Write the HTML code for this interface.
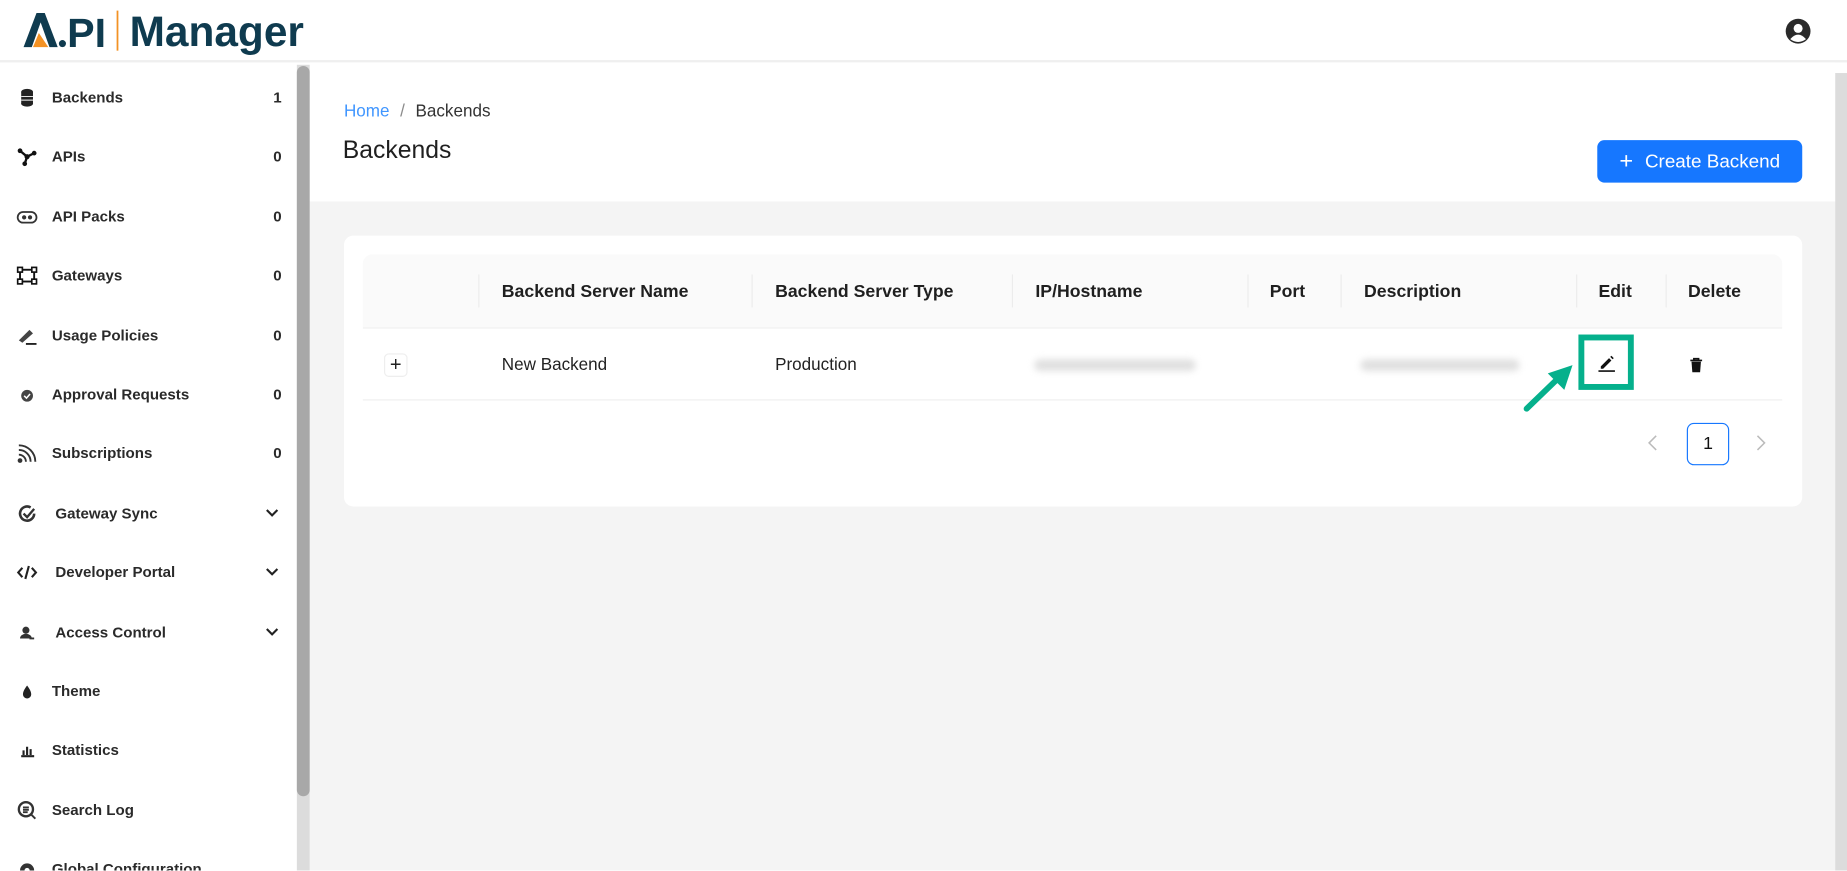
<!DOCTYPE html>
<html><head><meta charset="utf-8"><style>
*{box-sizing:border-box;margin:0;padding:0}
html,body{width:1847px;height:870px;overflow:hidden;background:#fff}
#w{position:absolute;left:0;top:0;width:1568px;height:739px;transform:scale(1.17793);transform-origin:0 0;font-family:"Segoe UI","Liberation Sans",sans-serif;color:#1f1f1f;overflow:hidden}
.abs{position:absolute}
.hdr{left:0;top:0;width:1568px;height:53px;background:#fff;border-bottom:2px solid #efefef}
.side{left:0;top:55px;width:252px;height:684px;background:#fff}
.sb{left:252px;top:55px;width:11px;height:684px;background:#dcdcdc}
.thumb{left:252px;top:56px;width:11px;height:620px;background:#a8a8a8;border-radius:6px}
.item{position:absolute;left:0;width:252px;height:20px;font-size:12.8px;font-weight:700;color:#2a2a2a;line-height:20px}
.item .t{position:absolute;left:44px}
.item .c{position:absolute;left:232px;font-weight:600}
.item .ic{position:absolute;left:14px;top:1px;width:18px;height:18px}
.item .ch{position:absolute;left:224px;top:2px}
.main{left:263px;top:53px;width:1295px;height:118px;background:#fff}
.gray{left:263px;top:171px;width:1295px;height:568px;background:#f4f4f4}
.rs{left:1558px;top:62px;width:10px;height:677px;background:#dcdcdc}
.card{left:292px;top:200px;width:1238px;height:230px;background:#fff;border-radius:8px}
.th{left:308px;top:216px;width:1205px;height:63px;background:#fafafa;border-bottom:1px solid #eee;border-radius:8px 8px 0 0}
.hd{position:absolute;top:239px;font-size:15px;font-weight:700;color:#1f1f1f}
.sep{position:absolute;top:233px;width:1px;height:28px;background:#ececec}
.cell{position:absolute;top:302px;font-size:14.5px;color:#222}
.blur{position:absolute;top:305px;height:10px;background:#e0e0e0;filter:blur(3px);border-radius:6px}
</style></head><body><div id="w">
<div class="abs hdr"></div>
<svg class="abs" style="left:16px;top:6px" width="250" height="42" viewBox="0 0 250 42">
<path d="M4 34 L15 5 L22 5 L33 34 L26 34 L18.5 13 L11 34 Z" fill="#0f3b4f"/>
<path d="M12 34 L17 22 L25 34 Z" fill="#f39224"/>
<circle cx="37" cy="31" r="3" fill="#0f3b4f"/>
<text x="41" y="34" font-family="Liberation Sans,sans-serif" font-weight="700" font-size="35" fill="#0f3b4f">PI</text>
<rect x="83" y="3" width="1.5" height="34" fill="#f39224"/>
<text x="94" y="33" font-family="Liberation Sans,sans-serif" font-weight="700" font-size="36" textLength="148" fill="#0f3b4f">Manager</text>
</svg>
<svg class="abs" style="left:1515px;top:15px" width="23" height="23" viewBox="0 0 24 24"><circle cx="12" cy="12" r="11" fill="#2a2a2a"/><circle cx="12" cy="9.5" r="4" fill="#fff"/><path d="M5 19 Q12 11 19 19 Q12 24 5 19Z" fill="#fff"/></svg>

<div class="abs side"></div>
<div class="abs sb"></div><div class="abs thumb"></div>

<div class="item" style="top:73px"><svg class="ic" viewBox="0 0 18 18"><ellipse cx="9" cy="4" rx="5" ry="2.5" fill="#222"/><rect x="4" y="4" width="10" height="10" fill="#222"/><ellipse cx="9" cy="14" rx="5" ry="2.5" fill="#222"/><path d="M4 8h10M4 11h10" stroke="#fff" stroke-width=".8"/></svg><span class="t">Backends</span><span class="c">1</span></div>
<div class="item" style="top:123px"><svg class="ic" viewBox="0 0 18 18"><path d="M3 4 L9 9 L15 6 M9 9 L7 15" stroke="#111" stroke-width="2" fill="none"/><circle cx="3" cy="4" r="2" fill="#111"/><circle cx="15" cy="6" r="2" fill="#111"/><circle cx="7" cy="15" r="2" fill="#111"/><circle cx="9" cy="9" r="2.2" fill="#111"/></svg><span class="t">APIs</span><span class="c">0</span></div>
<div class="item" style="top:174px"><svg class="ic" viewBox="0 0 18 18"><rect x="1" y="5" width="16" height="9" rx="4.5" stroke="#333" stroke-width="1.5" fill="none"/><circle cx="6.5" cy="9.5" r="1.8" fill="#333"/><circle cx="11.5" cy="9.5" r="1.8" fill="#333"/></svg><span class="t">API Packs</span><span class="c">0</span></div>
<div class="item" style="top:224px"><svg class="ic" viewBox="0 0 18 18"><rect x="3" y="4" width="12" height="10" stroke="#111" stroke-width="1.6" fill="none"/><rect x="1" y="2" width="4" height="4" fill="#fff" stroke="#111" stroke-width="1.4"/><rect x="13" y="2" width="4" height="4" fill="#fff" stroke="#111" stroke-width="1.4"/><rect x="1" y="12" width="4" height="4" fill="#fff" stroke="#111" stroke-width="1.4"/><rect x="13" y="12" width="4" height="4" fill="#fff" stroke="#111" stroke-width="1.4"/></svg><span class="t">Gateways</span><span class="c">0</span></div>
<div class="item" style="top:275px"><svg class="ic" viewBox="0 0 18 18"><path d="M2 13 L11 4 L14 7 L5 15Z" fill="#444"/><path d="M8 16h9" stroke="#222" stroke-width="1.6"/></svg><span class="t">Usage Policies</span><span class="c">0</span></div>
<div class="item" style="top:325px"><svg class="ic" viewBox="0 0 18 18"><circle cx="9" cy="10" r="5" fill="#444"/><path d="M6.5 10l2 2 3-3.5" stroke="#fff" stroke-width="1.3" fill="none"/></svg><span class="t">Approval Requests</span><span class="c">0</span></div>
<div class="item" style="top:375px"><svg class="ic" viewBox="0 0 18 18"><circle cx="3" cy="15" r="2" fill="#333"/><path d="M2 10a6 6 0 0 1 6 6M2 6a10 10 0 0 1 10 10M2 2a14 14 0 0 1 14 14" stroke="#333" stroke-width="1.6" fill="none"/></svg><span class="t">Subscriptions</span><span class="c">0</span></div>
<div class="item" style="top:426px"><svg class="ic" viewBox="0 0 18 18"><path d="M15 9a6 6 0 1 1-3-5.2" stroke="#333" stroke-width="2.2" fill="none"/><path d="M6 9l3 3 6-7" stroke="#333" stroke-width="2" fill="none"/></svg><span class="t" style="left:47px">Gateway Sync</span><svg class="ch" width="14" height="14" viewBox="0 0 14 14"><path d="M2.5 5l4.5 4.5 4.5-4.5" stroke="#222" stroke-width="1.8" fill="none"/></svg></div>
<div class="item" style="top:476px"><svg class="ic" viewBox="0 0 18 18"><path d="M5 5L1.5 9 5 13M13 5l3.5 4L13 13M10.5 3.5l-3 11" stroke="#222" stroke-width="1.8" fill="none"/></svg><span class="t" style="left:47px">Developer Portal</span><svg class="ch" width="14" height="14" viewBox="0 0 14 14"><path d="M2.5 5l4.5 4.5 4.5-4.5" stroke="#222" stroke-width="1.8" fill="none"/></svg></div>
<div class="item" style="top:527px"><svg class="ic" viewBox="0 0 18 18"><circle cx="8" cy="7" r="3" fill="#333"/><path d="M3 14a5 4 0 0 1 10 0Z" fill="#333"/><path d="M11 14h4" stroke="#333" stroke-width="1.5"/></svg><span class="t" style="left:47px">Access Control</span><svg class="ch" width="14" height="14" viewBox="0 0 14 14"><path d="M2.5 5l4.5 4.5 4.5-4.5" stroke="#222" stroke-width="1.8" fill="none"/></svg></div>
<div class="item" style="top:577px"><svg class="ic" viewBox="0 0 18 18"><path d="M9 4 C6 8 5.5 10 5.5 11.5a3.5 3.5 0 0 0 7 0C12.5 10 12 8 9 4Z" fill="#222"/></svg><span class="t">Theme</span></div>
<div class="item" style="top:627px"><svg class="ic" viewBox="0 0 18 18"><path d="M4 14h11M6 13V9M9 13V6M12 13V8" stroke="#222" stroke-width="1.8"/></svg><span class="t">Statistics</span></div>
<div class="item" style="top:678px"><svg class="ic" viewBox="0 0 18 18"><circle cx="8" cy="8" r="6" stroke="#333" stroke-width="2" fill="none"/><path d="M5.5 6.5h5M5.5 8.5h5M5.5 10.5h4M12 12l4 4" stroke="#333" stroke-width="1.6"/></svg><span class="t">Search Log</span></div>
<div class="item" style="top:728px"><svg class="ic" viewBox="0 0 18 18"><circle cx="9" cy="10" r="6" fill="#333"/><circle cx="9" cy="10" r="2.2" fill="#fff"/></svg><span class="t">Global Configuration</span></div>

<div class="abs main"></div>
<div class="abs gray"></div>
<div class="abs rs"></div>
<div class="abs" style="left:292px;top:87px;font-size:14.5px;color:#1677ff"><span style="color:#4096ff">Home</span><span style="color:#8c8c8c;margin:0 9px 0 9px">/</span><span style="color:#333">Backends</span></div>
<div class="abs" style="left:291px;top:116px;font-size:21px;color:#1f1f1f">Backends</div>
<div class="abs" style="left:1356px;top:119px;width:174px;height:36px;background:#1677ff;border-radius:6px;color:#fff;font-size:16px;line-height:37px;text-align:center"><span style="font-size:20px;vertical-align:-1px;margin-right:10px">+</span>Create Backend</div>

<div class="abs card"></div>
<div class="abs th"></div>
<div class="sep" style="left:406px"></div><div class="sep" style="left:638px"></div><div class="sep" style="left:859px"></div><div class="sep" style="left:1059px"></div><div class="sep" style="left:1138px"></div><div class="sep" style="left:1338px"></div><div class="sep" style="left:1414px"></div>
<div class="hd" style="left:426px">Backend Server Name</div>
<div class="hd" style="left:658px">Backend Server Type</div>
<div class="hd" style="left:879px">IP/Hostname</div>
<div class="hd" style="left:1078px">Port</div>
<div class="hd" style="left:1158px">Description</div>
<div class="hd" style="left:1357px">Edit</div>
<div class="hd" style="left:1433px">Delete</div>
<div class="abs" style="left:308px;top:339px;width:1205px;height:1px;background:#efefef"></div>
<div class="abs" style="left:326px;top:300px;width:20px;height:20px;border:1px solid #eee;border-radius:4px;text-align:center;line-height:17px;font-size:17px;color:#222">+</div>
<div class="cell" style="left:426px">New Backend</div>
<div class="cell" style="left:658px">Production</div>
<div class="blur" style="left:878px;width:137px"></div>
<div class="blur" style="left:1155px;width:135px"></div>
<div class="abs" style="left:1340px;top:284px;width:47px;height:47px;border:5px solid #05b08c"></div>
<svg class="abs" style="left:1355px;top:299px" width="18" height="18" viewBox="0 0 18 18"><path d="M4 12 L4 14 L6 14 L13 7 L11 5Z M12 4 L14 6 L15 5 L13 3Z" fill="#111"/><path d="M2 16h14" stroke="#111" stroke-width="1.3"/></svg>
<svg class="abs" style="left:1433px;top:303px" width="14" height="14" viewBox="0 0 14 14"><path d="M2 3h10M5 3V1.5h4V3" stroke="#111" stroke-width="1.4" fill="none"/><path d="M3 4h8l-.7 9H3.7Z" fill="#111"/></svg>
<svg class="abs" style="left:1288px;top:302px" width="54" height="52" viewBox="0 0 54 52"><path d="M8 45 L36 18" stroke="#05b08c" stroke-width="5" stroke-linecap="round"/><path d="M47 8 L26 15 L40 29Z" fill="#05b08c"/></svg>
<svg class="abs" style="left:1397px;top:369px" width="12" height="14" viewBox="0 0 12 14"><path d="M9 1 L3 7 L9 13" stroke="#bbb" stroke-width="1.3" fill="none"/></svg>
<div class="abs" style="left:1432px;top:359px;width:36px;height:36px;border:1px solid #1677ff;border-radius:6px;text-align:center;line-height:34px;font-size:15px;color:#111">1</div>
<svg class="abs" style="left:1489px;top:369px" width="12" height="14" viewBox="0 0 12 14"><path d="M3 1 L9 7 L3 13" stroke="#bbb" stroke-width="1.3" fill="none"/></svg>
</div></body></html>
